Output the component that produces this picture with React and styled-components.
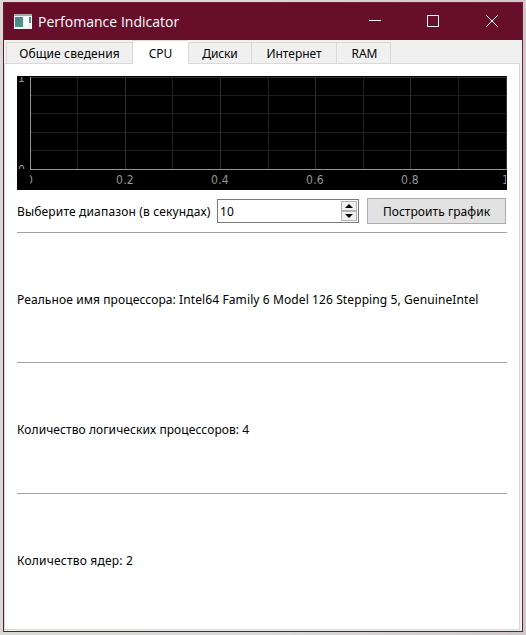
import React from "react";
import styled, { createGlobalStyle } from "styled-components";

const Global = createGlobalStyle`
  * { box-sizing: border-box; }
  html, body { margin: 0; padding: 0; }
  body { background: #d6d2d4; font: 12px/16px "Noto Sans", "Open Sans", sans-serif; color: #000; overflow: hidden; }
`;

const Desktop = styled.div`
  width: 526px;
  height: 635px;
  padding: 2px 3px 3px;
  background: linear-gradient(to right, #d9d9d7, #d9d9d9 50%, #cfc8cb);
`;
const Window = styled.div`
  display: flex;
  flex-direction: column;
  width: 520px;
  height: 630px;
  border: 1px solid #6b1836;
  border-top-color: #741c3a;
  background: #f0f0f0;
`;
const TitleBar = styled.header`
  display: flex;
  align-items: center;
  flex: none;
  height: 37px;
  padding: 0 1px 0 10px;
  background: #670e2b;
  color: #fff;
`;
const AppIcon = styled.svg`
  margin-bottom: 1px;
`;
const Title = styled.h1`
  flex: 1;
  margin: 0 0 0 6px;
  font: 400 14px/20px "Open Sans", "Noto Sans", sans-serif;
  letter-spacing: ${(p) => p.$spacing}px;
  white-space: nowrap;
`;
const WindowButton = styled.button`
  display: grid;
  place-items: center;
  width: 58.5px;
  height: 37px;
  padding: 0 0 1px;
  border: 0;
  background: none;
  color: inherit;
`;
const TabBar = styled.nav`
  display: flex;
  align-items: flex-end;
  flex: none;
  height: 23px;
  padding-left: 2px;
`;
const Tab = styled.button`
  width: ${(p) => p.$width}px;
  height: ${(p) => (p.$active ? 24 : 22)}px;
  margin-bottom: -1px;
  padding: 2px 0 0 ${(p) => (p.$last ? 2 : 0)}px;
  border: solid #d9d9d9;
  border-width: 1px ${(p) => (p.$last ? 1 : 0)}px ${(p) => (p.$active ? 0 : 1)}px 1px;
  background: ${(p) => (p.$active ? "#fff" : "#f0f0f0")};
  font: inherit;
  color: inherit;
  letter-spacing: ${(p) => p.$spacing}px;
  white-space: nowrap;
  z-index: 1;
`;
const Pane = styled.main`
  display: flex;
  flex-direction: column;
  flex: 1;
  margin: 0 2px 1px 0;
  padding: 12px 11px 0 12px;
  border: 1px solid #d9d9d9;
  background: #fff;
`;
const Plot = styled.svg`
  display: block;
  flex: none;
  width: 490px;
  height: 114px;
  background: #000;
  font: 12px "DejaVu Sans Condensed", "Noto Sans", sans-serif;
  letter-spacing: 0.2px;
`;
const Controls = styled.div`
  display: flex;
  align-items: center;
  flex: none;
  height: 42px;
`;
const Label = styled.span`
  letter-spacing: ${(p) => p.$spacing}px;
  white-space: nowrap;
`;
const RangeLabel = styled(Label)`
  width: 200px;
  padding-top: 2px;
`;
const SpinBox = styled.div`
  display: flex;
  width: 142px;
  height: 24px;
  padding: 1px;
  border: 1px solid #7a7a7a;
`;
const SpinValue = styled.span`
  flex: 1;
  padding-left: 1px;
  line-height: 22px;
  letter-spacing: 0.1px;
`;
const SpinButtons = styled.div`
  display: flex;
  flex-direction: column;
  width: 16px;
`;
const SpinButton = styled.button`
  display: grid;
  place-items: center;
  flex: 1;
  padding: 0;
  border: 1px solid #b4b4b4;
  background: #f0f0f0;
`;
const PlotButton = styled.button`
  width: 139px;
  height: 26px;
  margin-left: 8px;
  padding: 2px 0 0;
  border: 1px solid #adadad;
  background: #e1e1e1;
  font: inherit;
  color: inherit;
  letter-spacing: ${(p) => p.$spacing}px;
`;
const InfoRow = styled.section`
  display: flex;
  align-items: center;
  flex: none;
  height: ${(p) => p.$height}px;
  width: 490px;
  padding-top: 4px;
  border-top: 1px solid #a0a0a0;
`;

const TABS = [
  { text: "Общие сведения", width: 126, spacing: 0.12 },
  { text: "CPU", width: 56, spacing: 0, active: true },
  { text: "Диски", width: 63, spacing: -0.1 },
  { text: "Интернет", width: 85, spacing: 0 },
  { text: "RAM", width: 55, spacing: 0, last: true },
];
const INFO = [
  { text: "Реальное имя процессора: Intel64 Family 6 Model 126 Stepping 5, GenuineIntel", height: 130, spacing: 0.1 },
  { text: "Количество логических процессоров: 4", height: 131, spacing: 0.08 },
  { text: "Количество ядер: 2", height: 131, spacing: 0.2 },
];
const MAJOR = [108, 203, 298, 393];
const MINOR = [60, 155, 251, 346, 441];

function CpuPlot() {
  return (
    <Plot viewBox="0 0 490 114" shapeRendering="crispEdges">
      <defs>
        <clipPath id="yAxis"><rect x="0" y="1" width="13" height="92" /></clipPath>
        <clipPath id="xAxis"><rect x="13" y="94" width="476" height="20" /></clipPath>
      </defs>
      {[19, 37, 56, 74].map((y) => <rect key={y} x="14" y={y} width="476" height="1" fill="#1c1c1c" />)}
      {MINOR.map((x) => <rect key={x} x={x} y="1" width="1" height="92" fill="#202020" />)}
      {[...MAJOR, 489].map((x) => <rect key={x} x={x} y="1" width="1" height="92" fill="#303030" />)}
      <rect x="14" y="1" width="476" height="1" fill="#303030" />
      <rect x="13" y="1" width="1" height="93" fill="#969696" />
      <rect x="13" y="93" width="477" height="1" fill="#969696" />
      <g fill="#969696" textAnchor="middle">
        <g clipPath="url(#yAxis)">
          <text x="4.5" y="6">1</text>
          <text x="4.5" y="98">0</text>
        </g>
        <g clipPath="url(#xAxis)">
          <text x="12.5" y="108">0</text>
          {MAJOR.map((x, i) => <text key={x} x={x} y="108">{`0.${(i + 1) * 2}`}</text>)}
          <text x="488.5" y="108">1</text>
        </g>
      </g>
    </Plot>
  );
}

export default function App() {
  return (
    <>
      <Global />
      <Desktop>
        <Window>
          <TitleBar>
            <AppIcon width="18" height="15" viewBox="0 0 18 15" shapeRendering="crispEdges">
              <defs>
                <linearGradient id="iconFill" x1="0" y1="0" x2="1" y2="1">
                  <stop offset="0" stopColor="#4b7fa0" />
                  <stop offset="1" stopColor="#4fa070" />
                </linearGradient>
              </defs>
              <rect width="18" height="15" fill="#f3f3f3" />
              <rect width="18" height="2" fill="#a9a9a9" />
              <rect x="1" y="3" width="8" height="10" fill="url(#iconFill)" />
              <rect x="10" y="3" width="4" height="10" fill="#fff" />
              <rect x="15" y="3" width="2" height="6" fill="url(#iconFill)" />
            </AppIcon>
            <Title $spacing={0.02}>Perfomance Indicator</Title>
            <WindowButton aria-label="Minimize">
              <svg width="12" height="12"><path d="M0 5.5h12" stroke="#fff" /></svg>
            </WindowButton>
            <WindowButton aria-label="Maximize">
              <svg width="12" height="12"><path d="M.5.5h11v11H.5z" fill="none" stroke="#fff" /></svg>
            </WindowButton>
            <WindowButton aria-label="Close">
              <svg width="12" height="12"><path d="M.4.4l11.2 11.2M11.6.4L.4 11.6" stroke="#fff" /></svg>
            </WindowButton>
          </TitleBar>
          <TabBar>
            {TABS.map((t) => (
              <Tab key={t.text} $width={t.width} $active={t.active} $last={t.last} $spacing={t.spacing}>{t.text}</Tab>
            ))}
          </TabBar>
          <Pane>
            <CpuPlot />
            <Controls>
              <RangeLabel $spacing={0.16}>Выберите диапазон (в секундах)</RangeLabel>
              <SpinBox>
                <SpinValue>10</SpinValue>
                <SpinButtons>
                  <SpinButton aria-label="Increase"><svg width="8" height="4" viewBox="0 0 8 4"><path d="M0 4L4 0l4 4z" /></svg></SpinButton>
                  <SpinButton aria-label="Decrease"><svg width="8" height="4" viewBox="0 0 8 4"><path d="M0 0l4 4 4-4z" /></svg></SpinButton>
                </SpinButtons>
              </SpinBox>
              <PlotButton $spacing={0.05}>Построить график</PlotButton>
            </Controls>
            {INFO.map((r) => (
              <InfoRow key={r.text} $height={r.height}><Label $spacing={r.spacing}>{r.text}</Label></InfoRow>
            ))}
          </Pane>
        </Window>
      </Desktop>
    </>
  );
}
